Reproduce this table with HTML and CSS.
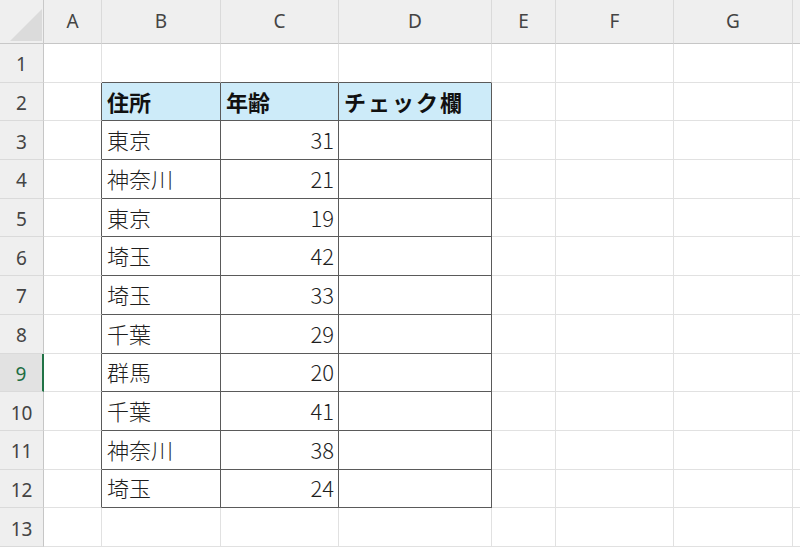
FILE: index.html
```html
<!DOCTYPE html>
<html lang="ja">
<head>
<meta charset="utf-8">
<link rel="stylesheet" href="styles.css">
</head>
<body>
<div class="sheet">
  <div class="corner"><div class="tri"></div></div>
  <div class="ch">A</div><div class="ch">B</div><div class="ch">C</div><div class="ch">D</div><div class="ch">E</div><div class="ch">F</div><div class="ch">G</div><div class="ch"></div>

  <div class="rh">1</div><div class="c"></div><div class="c tt"></div><div class="c tt"></div><div class="c tt"></div><div class="c"></div><div class="c"></div><div class="c"></div><div class="c"></div>

  <div class="rh">2</div><div class="c tl"></div><div class="c t th">住所</div><div class="c t th">年齢</div><div class="c t th wide">チェック欄</div><div class="c"></div><div class="c"></div><div class="c"></div><div class="c"></div>

  <div class="rh">3</div><div class="c tl"></div><div class="c t">東京</div><div class="c t num">31</div><div class="c t"></div><div class="c"></div><div class="c"></div><div class="c"></div><div class="c"></div>

  <div class="rh">4</div><div class="c tl"></div><div class="c t">神奈川</div><div class="c t num">21</div><div class="c t"></div><div class="c"></div><div class="c"></div><div class="c"></div><div class="c"></div>

  <div class="rh">5</div><div class="c tl"></div><div class="c t">東京</div><div class="c t num">19</div><div class="c t"></div><div class="c"></div><div class="c"></div><div class="c"></div><div class="c"></div>

  <div class="rh">6</div><div class="c tl"></div><div class="c t">埼玉</div><div class="c t num">42</div><div class="c t"></div><div class="c"></div><div class="c"></div><div class="c"></div><div class="c"></div>

  <div class="rh">7</div><div class="c tl"></div><div class="c t">埼玉</div><div class="c t num">33</div><div class="c t"></div><div class="c"></div><div class="c"></div><div class="c"></div><div class="c"></div>

  <div class="rh">8</div><div class="c tl"></div><div class="c t">千葉</div><div class="c t num">29</div><div class="c t"></div><div class="c"></div><div class="c"></div><div class="c"></div><div class="c"></div>

  <div class="rh active">9</div><div class="c tl"></div><div class="c t">群馬</div><div class="c t num">20</div><div class="c t"></div><div class="c"></div><div class="c"></div><div class="c"></div><div class="c"></div>

  <div class="rh">10</div><div class="c tl"></div><div class="c t">千葉</div><div class="c t num">41</div><div class="c t"></div><div class="c"></div><div class="c"></div><div class="c"></div><div class="c"></div>

  <div class="rh">11</div><div class="c tl"></div><div class="c t">神奈川</div><div class="c t num">38</div><div class="c t"></div><div class="c"></div><div class="c"></div><div class="c"></div><div class="c"></div>

  <div class="rh">12</div><div class="c tl"></div><div class="c t">埼玉</div><div class="c t num">24</div><div class="c t"></div><div class="c"></div><div class="c"></div><div class="c"></div><div class="c"></div>

  <div class="rh">13</div><div class="c"></div><div class="c"></div><div class="c"></div><div class="c"></div><div class="c"></div><div class="c"></div><div class="c"></div><div class="c"></div>
</div>
</body>
</html>
```

FILE: styles.css
```css
html, body {
  margin: 0;
  padding: 0;
  background: #ffffff;
  overflow: hidden;
}

.sheet {
  width: 800px;
  display: grid;
  grid-template-columns: 44px 58px 119px 118px 153px 64px 118px 119px 1fr;
  grid-template-rows: 44px repeat(13, 38.7px);
  font-family: "Noto Sans CJK JP", "Noto Sans", sans-serif;
}

.sheet > div {
  box-sizing: border-box;
  min-width: 0;
  overflow: hidden;
}

.corner {
  background: #efefef;
  border-right: 1px solid #c8c8c8;
  border-bottom: 1px solid #c8c8c8;
  display: flex;
  align-items: flex-end;
  justify-content: flex-end;
  padding: 0 1px 2px 0;
}

.tri {
  width: 32px;
  height: 32px;
  background: #dbdbdb;
  clip-path: polygon(100% 0, 100% 100%, 0 100%);
}

.ch {
  background: #efefef;
  border-right: 1px solid #dadada;
  border-bottom: 1px solid #c6c6c6;
  display: flex;
  align-items: center;
  justify-content: center;
  font-family: "Noto Sans", "Open Sans", sans-serif;
  font-size: 19px;
  color: #444444;
  padding-bottom: 2px;
}

.rh {
  background: #efefef;
  border-right: 1px solid #c6c6c6;
  border-bottom: 1px solid #dadada;
  display: flex;
  align-items: center;
  justify-content: center;
  font-family: "Noto Sans", "Open Sans", sans-serif;
  font-size: 19px;
  color: #444444;
  padding-top: 3px;
}

.rh.active {
  background: #e2e2e2;
  color: #1e6e42;
  border-right: 2px solid #217346;
}

.c {
  border-right: 1px solid #e1e1e1;
  border-bottom: 1px solid #e1e1e1;
  display: flex;
  align-items: center;
  padding: 0 4px 2px 5px;
  font-size: 22px;
  font-weight: 300;
  color: #1e1e1e;
  white-space: nowrap;
}

.tt {
  border-bottom-color: #5a5a5a;
}

.tl {
  border-right-color: #5a5a5a;
}

.t {
  border-right-color: #5a5a5a;
  border-bottom-color: #5a5a5a;
}

.th {
  background: #cdebf9;
  font-weight: bold;
  color: #111111;
}

.wide {
  letter-spacing: 2px;
}

.num {
  justify-content: flex-end;
}
```
